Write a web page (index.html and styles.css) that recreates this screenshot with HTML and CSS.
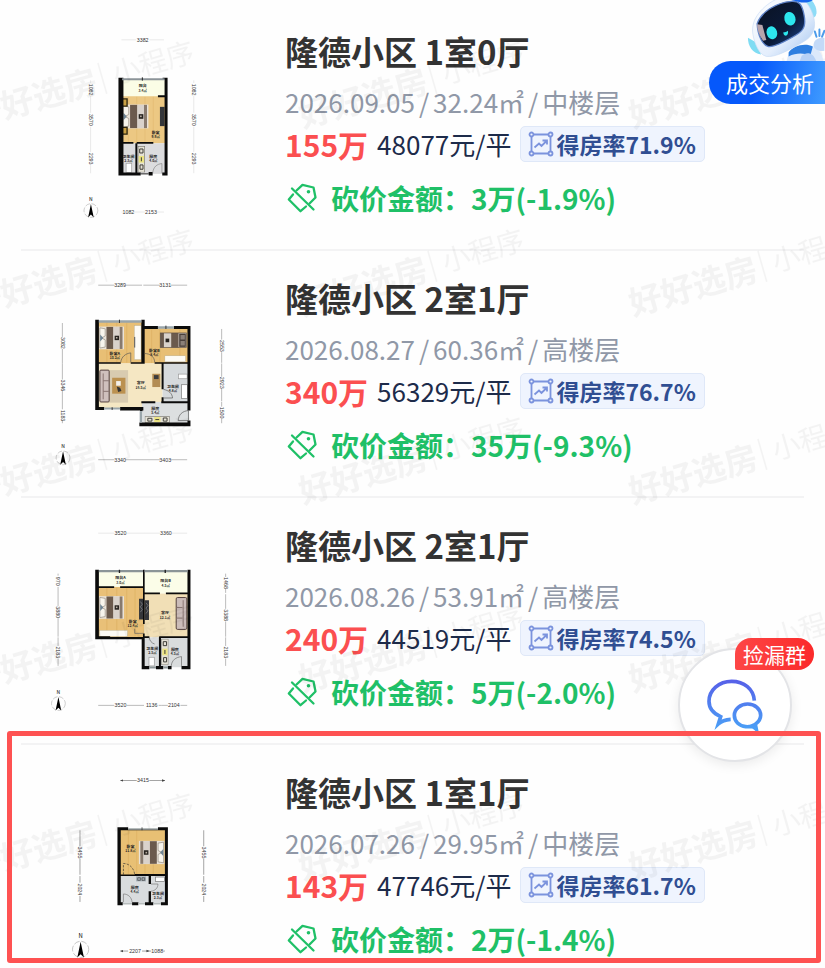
FILE: index.html
```html
<!DOCTYPE html>
<html lang="zh-CN">
<head>
    <meta charset="UTF-8">
    <meta name="viewport" content="width=device-width, initial-scale=1.0">
    <link rel="stylesheet" href="styles.css">
    <title>隆德小区 成交记录</title>
</head>
<body>

    <!-- shared icons -->
    <svg class="defs" aria-hidden="true">
        <defs>
            <symbol id="icon-ratio" viewBox="0 0 26 26">
                <g fill="none" stroke="#7b93dd" stroke-width="1.8">
                    <path d="M5 3.500H21M5 22.500H21M3.500 5V21M22.500 5V21"/>
                    <circle cx="3.500" cy="3.500" r="2"/>
                    <circle cx="22.500" cy="3.500" r="2"/>
                    <circle cx="3.500" cy="22.500" r="2"/>
                    <circle cx="22.500" cy="22.500" r="2"/>
                    <path d="M6.500 16.500L11 12.500L13.500 15L18.500 10M14.500 9.500H19V13.500"/>
                </g>
            </symbol>
            <symbol id="icon-cut" viewBox="0 0 30 30">
                <g fill="none" stroke="#1fc067" stroke-width="2.300" stroke-linecap="round" stroke-linejoin="round">
                    <path d="M9.500 7.500L15.500 1.800L26.500 4.500L28.500 14.500L22.500 20.500"/>
                    <path d="M6 11.500L1.800 16.500L13.500 28.200L19 23.500"/>
                    <path d="M5 5.500L26.500 26.500"/>
                </g>
                <circle cx="21.500" cy="8.800" r="1.800" fill="#1fc067"/>
            </symbol>
            <symbol id="bed" viewBox="0 0 80 76">
                <rect x="0" y="2" width="80" height="72" fill="#e9e2d8"/>
                <path d="M3 6L20 9V32L8 38L20 44V67L3 70Z" fill="#f7f4ec" stroke="#8d8478" stroke-width="2"/>
                <path d="M4 27L14 38L4 49Z" fill="#6f8594"/>
                <rect x="24" y="3" width="22" height="70" fill="#6b5a4d"/>
                <rect x="46" y="3" width="20" height="70" fill="#d9d2cb"/>
                <rect x="66" y="3" width="9" height="70" fill="#887a6e"/>
                <rect x="50" y="31" width="14" height="14" fill="#27231f"/>
                <rect x="54" y="35" width="5" height="5" fill="#b9afa3"/>
            </symbol>
            <symbol id="compass" viewBox="0 0 50 72">
                <text x="25" y="14" font-size="16" text-anchor="middle">N</text>
                <circle cx="25" cy="45" r="22" fill="none" stroke="#999" stroke-width="1.500" stroke-dasharray="16 5"/>
                <path d="M25 24L34 67L25 58L16 67Z" fill="#000"/>
            </symbol>
            <symbol id="stove" viewBox="0 0 22 80">
                <rect x="1" y="1" width="20" height="78" fill="#e5e2d6" stroke="#77756d" stroke-width="2"/>
                <rect x="3" y="30" width="16" height="20" fill="#ece483"/>
                <path d="M6 9h10v12H6zM11 34v12M7 57h9v13H7z" fill="none" stroke="#3c3b36" stroke-width="3"/>
            </symbol>
            <marker id="tick" viewBox="0 0 8 8" refX="7" refY="4" markerWidth="5" markerHeight="5" orient="auto-start-reverse">
                <path d="M0 1L8 4L0 7Z" fill="#444"/>
            </marker>
            <pattern id="mark" width="330" height="188" patternUnits="userSpaceOnUse" x="295" y="-48">
                <g transform="translate(8 176) rotate(-16)">
                    <text class="mark-big" x="0" y="0">好好选房</text>
                    <path d="M138 -28V4" stroke="#000" stroke-width="1.500"/>
                    <text class="mark-small" x="149" y="-3">小程序</text>
                </g>
            </pattern>
        </defs>
    </svg>

    <ul class="list">
        <li class="item">
            <svg class="plan" viewBox="63 12 750 654" role="img" aria-label="户型图">
                <rect x="360" y="240" width="138" height="52" fill="#fbfde6"/>
                <rect x="360" y="290" width="138" height="142" fill="#ecc883"/>
                <path d="M385 292V430M410 292V430M435 292V430M460 292V430" stroke="#e2b970" stroke-width="2"/>
                <rect x="360" y="432" width="138" height="92" fill="#dcdcde"/>
                <use href="#bed" x="366" y="313" width="80" height="76"/>
                <path d="M365 298h16v22h-16zM365 384h16v20h-16z" fill="#c9a145" stroke="#2e2710" stroke-width="4"/>
                <rect x="480" y="322" width="14" height="58" fill="#34363a"/>
                <rect x="378" y="492" width="17" height="28" fill="#fff" stroke="#999" stroke-width="2"/>
                <use href="#stove" x="413" y="440" width="22" height="80"/>
                <path d="M355 234H370V520H422V529H355ZM488 234H503V529H487V520H494V240H488ZM406 432H412V522H406ZM446 518H458V529H446ZM355 428H400V433H355ZM410 428H460V433H410ZM474 287H498V293H474Z" fill="#0b0b0b"/>
                <path d="M366 236H494V242H366Z" fill="#8c9499"/>
                <path d="M427 233V243M422 524H446" stroke="#222" stroke-width="3"/>
                <path d="M458 522C460 502 472 494 486 493V522" fill="none" stroke="#666" stroke-width="1.500"/>
                <g class="room">
                    <text x="428" y="263">阳台</text><text x="428" y="277" class="area">3.4㎡</text>
                    <text x="467" y="404">卧室</text><text x="467" y="417" class="area">9.9㎡</text>
                    <text x="385" y="475">卫生间</text><text x="385" y="488" class="area">2.3㎡</text>
                    <text x="460" y="475">厨房</text><text x="460" y="488" class="area">4.0㎡</text>
                </g>
                <g class="dim">
                    <path class="faint" d="M364 120H408M448 120H492M364 639H368M402 639H412M412 639H436M470 639H492"/>
                    <path class="faint" d="M271 242V250M271 288V340M271 382V458M271 498V522M582 242V250M582 288V340M582 382V458M582 498V522"/>
                    <text x="428" y="126">3382</text>
                    <text x="385" y="645">1082</text>
                    <text x="453" y="645">2153</text>
                    <g transform="translate(266 270) rotate(90)"><text>1082</text></g>
                    <g transform="translate(266 361) rotate(90)"><text>3570</text></g>
                    <g transform="translate(266 478) rotate(90)"><text>2293</text></g>
                    <g transform="translate(577 270) rotate(90)"><text>1082</text></g>
                    <g transform="translate(577 361) rotate(90)"><text>3570</text></g>
                    <g transform="translate(577 478) rotate(90)"><text>2293</text></g>
                </g>
                <use href="#compass" x="247" y="592" width="50" height="68"/>
            </svg>
            <div class="info">
                <h2 class="title">隆德小区 1室0厅</h2>
                <p class="meta">2026.09.05<span class="slash">/</span>32.24㎡<span class="slash">/</span>中楼层</p>
                <div class="price">
                    <strong class="total">155万</strong>
                    <span class="unit">48077元/平</span>
                    <span class="ratio"><svg class="ratio-icon"><use href="#icon-ratio"/></svg>得房率71.9%</span>
                </div>
                <p class="cut"><svg class="cut-icon"><use href="#icon-cut"/></svg>砍价金额：3万(-1.9%)</p>
            </div>
        </li>

        <li class="item">
            <svg class="plan" viewBox="63 3 750 654" role="img" aria-label="户型图">
                <rect x="290" y="216" width="138" height="126" fill="#e8bf75"/>
                <rect x="430" y="236" width="138" height="106" fill="#e8bf75"/>
                <path d="M320 218V340M350 218V340M380 218V340M455 240V340M480 240V340M540 240V340" stroke="#dcae60" stroke-width="2"/>
                <rect x="290" y="342" width="198" height="134" fill="#f5e7c3"/>
                <rect x="488" y="342" width="78" height="116" fill="#d6dadc"/>
                <rect x="426" y="458" width="142" height="68" fill="#dcdfe0"/>
                <use href="#bed" x="296" y="228" width="76" height="74"/>
                <rect x="403" y="228" width="20" height="102" fill="#fdfbf5" stroke="#aa9"/>
                <path d="M404 262V294" stroke="#555" stroke-width="3"/>
                <!-- bed with the pillows on the right -->
                <rect x="481" y="250" width="79" height="44" fill="#d9d2cb"/>
                <path d="M481 250h11v44h-11zM514 250h22v44h-22z" fill="#6b5a4d"/>
                <path d="M497 267h11v11h-11z" fill="#27231f"/>
                <path d="M538 252h20v40h-20z" fill="#4a403b"/>
                <path d="M542 256h13v14h-13zM542 274h13v14h-13z" fill="#8b8078"/>
                <rect x="481" y="250" width="79" height="44" fill="none" stroke="#5d4f43" stroke-width="2"/>
                <rect x="495" y="319" width="62" height="18" fill="#fdfbf5" stroke="#aa9"/>
                <rect x="326" y="362" width="58" height="98" fill="#d8cbb0"/>
                <rect x="336" y="385" width="40" height="48" fill="#bb9150"/>
                <path d="M348 395h14v14h-14z" fill="#f4f1ea"/>
                <path d="M350 411l10 4 4 10-10 3z" fill="#333"/>
                <rect x="299" y="362" width="28" height="96" rx="3" fill="#cfc0bd" stroke="#54413f" stroke-width="3"/>
                <path d="M309 372V450M309 394H327M309 426H327" stroke="#8a7673" stroke-width="3"/>
                <rect x="457" y="373" width="24" height="40" fill="#b38d54"/>
                <path d="M462 377h14v12h-14z" fill="#3c3c3c"/>
                <rect x="536" y="374" width="26" height="14" fill="#fff" stroke="#999" stroke-width="2"/>
                <rect x="545" y="406" width="18" height="42" fill="#fff" stroke="#777" stroke-width="2"/>
                <g transform="translate(510 500) rotate(90)"><use href="#stove" width="22" height="76"/></g>
                <path d="M285 210H296V473H312V482H285ZM424 210H434V340H424ZM432 229H474V238H432ZM522 229H572V484H563V238H522ZM296 338H362V343H296ZM392 338H434V343H392ZM464 338H566V343H464ZM485 342H491V420H485ZM485 444H491V458H485ZM424 456H466V462H424ZM484 456H568V462H484ZM360 473H430V484H360ZM418 520H563V514H572V531H418ZM420 476H427V486H420Z" fill="#0b0b0b"/>
                <path d="M296 212H424V219H296ZM474 230H522V237H474ZM312 475H360V481H312ZM419 486H426V520H419Z" fill="#99a5aa"/>
                <path d="M358 210V220M498 228V238M336 474V482" stroke="#333" stroke-width="3"/>
                <path d="M362 338C364 322 376 312 392 310V338M434 312C450 312 464 322 464 338M491 446H518C517 432 506 423 491 420M535 514C536 496 548 485 566 484V514H535" fill="none" stroke="#555" stroke-width="2"/>
                <g class="room">
                    <text x="344" y="316">卧室A</text><text x="344" y="329" class="area">10.2㎡</text>
                    <text x="463" y="306">卧室B</text><text x="463" y="319" class="area">8.4㎡</text>
                    <text x="422" y="405">客厅</text><text x="422" y="418" class="area">16.5㎡</text>
                    <text x="519" y="415">卫生间</text><text x="519" y="428" class="area">4.8㎡</text>
                    <text x="466" y="482">厨房</text><text x="466" y="495" class="area">5.4㎡</text>
                </g>
                <g class="dim">
                    <path d="M294 106H343M378 106H426M430 106H480M513 106H562M294 632H343M376 632H426M426 632H480M513 632H562"/>
                    <path d="M186 220V262M186 298V342M186 342V390M186 425V480M186 514V522M666 238V270M666 308V340M666 342V382M666 418V456M666 458V472M666 508V522"/>
                    <text x="360" y="112">3289</text>
                    <text x="496" y="112">3131</text>
                    <text x="360" y="638">3340</text>
                    <text x="496" y="638">3403</text>
                    <g transform="translate(181 280) rotate(90)"><text>3082</text></g>
                    <g transform="translate(181 408) rotate(90)"><text>3346</text></g>
                    <g transform="translate(181 499) rotate(90)"><text>1183</text></g>
                    <g transform="translate(661 289) rotate(90)"><text>2553</text></g>
                    <g transform="translate(661 400) rotate(90)"><text>2923</text></g>
                    <g transform="translate(661 490) rotate(90)"><text>1500</text></g>
                </g>
                <use href="#compass" x="163" y="584" width="50" height="68"/>
            </svg>
            <div class="info">
                <h2 class="title">隆德小区 2室1厅</h2>
                <p class="meta">2026.08.27<span class="slash">/</span>60.36㎡<span class="slash">/</span>高楼层</p>
                <div class="price">
                    <strong class="total">340万</strong>
                    <span class="unit">56329元/平</span>
                    <span class="ratio"><svg class="ratio-icon"><use href="#icon-ratio"/></svg>得房率76.7%</span>
                </div>
                <p class="cut"><svg class="cut-icon"><use href="#icon-cut"/></svg>砍价金额：35万(-9.3%)</p>
            </div>
        </li>

        <li class="item">
            <svg class="plan" viewBox="63 -6 750 654" role="img" aria-label="户型图">
                <rect x="290" y="216" width="140" height="46" fill="#fbfde8"/>
                <rect x="432" y="216" width="134" height="66" fill="#fbfde8"/>
                <rect x="290" y="262" width="142" height="152" fill="#e9c078"/>
                <path d="M320 264V410M350 264V410M380 264V410M405 264V410" stroke="#dcae60" stroke-width="2"/>
                <rect x="432" y="282" width="134" height="132" fill="#f1dfb6"/>
                <rect x="430" y="414" width="138" height="90" fill="#d9dcdd"/>
                <use href="#bed" x="296" y="288" width="76" height="72"/>
                <rect x="298" y="393" width="84" height="18" fill="#fdfbf5" stroke="#aa9"/>
                <path d="M417 298h13v62h-13zM434 302h13v60h-13z" fill="#34363a"/>
                <path d="M421 306l6 8-6 8 6 8-6 8M438 310l6 8-6 8 6 8-6 8" fill="none" stroke="#8d8f92" stroke-width="2"/>
                <rect x="529" y="294" width="32" height="96" rx="4" fill="#cbbcb9" stroke="#54413f" stroke-width="3"/>
                <path d="M550 302V382M530 324H548M530 356H548" stroke="#8a7673" stroke-width="3"/>
                <use href="#stove" x="484" y="418" width="22" height="80"/>
                <rect x="447" y="474" width="16" height="26" fill="#fff" stroke="#999" stroke-width="2"/>
                <path d="M285 210H296V411H330V413H432V420H285ZM429 210H434V374H429ZM563 210H572V510H545V500H563ZM296 260H342V265H296ZM360 260H432V265H360ZM434 279H480V284H434ZM498 279H566V284H498ZM429 402H434V420H429ZM425 418H434V500H448V510H425ZM477 412H483V500H477ZM468 500H490V510H468ZM434 411H448V416H434ZM478 411H566V416H478ZM504 500H515V510H504Z" fill="#0b0b0b"/>
                <path d="M296 211H429V218H296ZM434 211H563V218H434ZM448 502H468V508H448ZM490 502H504V508H490Z" fill="#8b9597"/>
                <path d="M358 210V220M496 210V220" stroke="#222" stroke-width="4"/>
                <path d="M404 388V402H430M448 414C448 424 456 432 464 434M514 500C516 482 528 474 545 472V500" fill="none" stroke="#666" stroke-width="2"/>
                <g class="room">
                    <text x="361" y="239">阳台A</text><text x="361" y="252" class="area">3.0㎡</text>
                    <text x="497" y="248">阳台B</text><text x="497" y="261" class="area">4.5㎡</text>
                    <text x="398" y="370">卧室</text><text x="398" y="383" class="area">12.4㎡</text>
                    <text x="495" y="345">客厅</text><text x="495" y="358" class="area">12.1㎡</text>
                    <text x="457" y="451">卫生间</text><text x="457" y="464" class="area">2.5㎡</text>
                    <text x="525" y="455">厨房</text><text x="525" y="468" class="area">4.5㎡</text>
                </g>
                <g class="dim">
                    <path class="faint" d="M294 100H342M380 100H434M434 100H480M516 100H562"/>
                    <path d="M294 619H342M380 619H432M476 619H484M484 619H504M542 619H562"/>
                    <path d="M173 222V228M173 262V320M173 356V412M173 414V440M173 478V500M678 222V232M678 268V280M678 284V328M678 366V412M678 414V440M678 478V500"/>
                    <text x="361" y="106">3520</text>
                    <text x="498" y="106">3360</text>
                    <text x="361" y="625">3520</text>
                    <text x="455" y="625">1136</text>
                    <text x="522" y="625">2104</text>
                    <g transform="translate(168 245) rotate(90)"><text>970</text></g>
                    <g transform="translate(168 338) rotate(90)"><text>3880</text></g>
                    <g transform="translate(168 459) rotate(90)"><text>2183</text></g>
                    <g transform="translate(673 250) rotate(90)"><text>1468</text></g>
                    <g transform="translate(673 347) rotate(90)"><text>3388</text></g>
                    <g transform="translate(673 459) rotate(90)"><text>2183</text></g>
                </g>
                <use href="#compass" x="149" y="571" width="50" height="68"/>
            </svg>
            <div class="info">
                <h2 class="title">隆德小区 2室1厅</h2>
                <p class="meta">2026.08.26<span class="slash">/</span>53.91㎡<span class="slash">/</span>高楼层</p>
                <div class="price">
                    <strong class="total">240万</strong>
                    <span class="unit">44519元/平</span>
                    <span class="ratio"><svg class="ratio-icon"><use href="#icon-ratio"/></svg>得房率74.5%</span>
                </div>
                <p class="cut"><svg class="cut-icon"><use href="#icon-cut"/></svg>砍价金额：5万(-2.0%)</p>
            </div>
        </li>

        <li class="item picked">
            <svg class="plan" viewBox="63 75 750 654" role="img" aria-label="户型图">
                <rect x="358" y="328" width="140" height="140" fill="#e8c074"/>
                <path d="M385 332V464M410 332V464M435 432V464M460 432V464" stroke="#dcae60" stroke-width="2"/>
                <rect x="358" y="468" width="140" height="86" fill="#d9dcde"/>
                <g transform="translate(494 436) rotate(180)"><use href="#bed" width="78" height="74"/></g>
                <rect x="408" y="471" width="30" height="15" fill="#a6b0b8"/>
                <path d="M413 475h8v8h-8zM426 475h8v8h-8z" fill="none" stroke="#444" stroke-width="2"/>
                <rect x="467" y="473" width="27" height="13" fill="#fff" stroke="#777" stroke-width="2"/>
                <path d="M352 323H384V332H362V549H368V558H352ZM474 323H504V558H483V549H495V332H474ZM360 465H404V470H360ZM404 464H496V470H404ZM446 468H453V494H446ZM446 516H453V549H460V558H435V549H446ZM396 549H415V558H396Z" fill="#0b0b0b"/>
                <path d="M384 325H474V331H384ZM368 551H396V556H368ZM415 551H435V556H415ZM460 551H483V556H460Z" fill="#b7bdbd"/>
                <path d="M384 331H474M426 323V332" stroke="#222" stroke-width="2"/>
                <path d="M370 466V432C388 432 402 446 404 466" fill="none" stroke="#333" stroke-width="2" stroke-dasharray="7 4"/>
                <path d="M370 549V524C384 524 395 534 396 549M453 516C466 514 474 506 474 494H453" fill="none" stroke="#777" stroke-width="2"/>
                <g class="room">
                    <text x="391" y="384">卧室</text><text x="391" y="397" class="area">11.8㎡</text>
                    <text x="404" y="509">厨房</text><text x="404" y="522" class="area">4.4㎡</text>
                    <text x="474" y="527">卫生间</text><text x="474" y="540" class="area">2.3㎡</text>
                </g>
                <g class="dim strong">
                    <path marker-start="url(#tick)" d="M361 182H410"/>
                    <path marker-end="url(#tick)" d="M448 182H495"/>
                    <path marker-start="url(#tick)" d="M361 696H384"/>
                    <path marker-end="url(#tick)" d="M426 696H448"/>
                    <path d="M448 696H454M490 696H495"/>
                    <path d="M239 332V380M239 418V466M239 470V490M239 530V548M612 332V380M612 418V466M612 470V490M612 530V548"/>
                    <text x="429" y="188">3415</text>
                    <text x="405" y="702">2207</text>
                    <text x="472" y="702">1088</text>
                    <g transform="translate(234 399) rotate(90)"><text>3455</text></g>
                    <g transform="translate(234 510) rotate(90)"><text>2024</text></g>
                    <g transform="translate(607 399) rotate(90)"><text>3455</text></g>
                    <g transform="translate(607 510) rotate(90)"><text>2024</text></g>
                </g>
                <use href="#compass" x="213" y="641" width="56" height="80"/>
            </svg>
            <div class="info">
                <h2 class="title">隆德小区 1室1厅</h2>
                <p class="meta">2026.07.26<span class="slash">/</span>29.95㎡<span class="slash">/</span>中楼层</p>
                <div class="price">
                    <strong class="total">143万</strong>
                    <span class="unit">47746元/平</span>
                    <span class="ratio"><svg class="ratio-icon"><use href="#icon-ratio"/></svg>得房率61.7%</span>
                </div>
                <p class="cut"><svg class="cut-icon"><use href="#icon-cut"/></svg>砍价金额：2万(-1.4%)</p>
            </div>
        </li>
    </ul>

    <svg class="watermark" aria-hidden="true">
        <rect width="100%" height="100%" fill="url(#mark)"/>
    </svg>

    <div class="analysis">
        <svg class="robot" viewBox="315 0 240 186" aria-hidden="true">
            <defs>
                <linearGradient id="head" x1="0" y1="0" x2="1" y2="1">
                    <stop offset="0" stop-color="#ffffff"/>
                    <stop offset="0.600" stop-color="#e4eefc"/>
                    <stop offset="1" stop-color="#9fc2f0"/>
                </linearGradient>
                <linearGradient id="visor" x1="0" y1="0" x2="1" y2="1">
                    <stop offset="0" stop-color="#0a1222"/>
                    <stop offset="0.600" stop-color="#0b1a38"/>
                    <stop offset="1" stop-color="#1d4a96"/>
                </linearGradient>
            </defs>
            <path d="M322 115C322 140 335 162 362 166L345 128Z" fill="#7fdcf3"/>
            <ellipse cx="513" cy="25" rx="16" ry="30" fill="#8edcf7" transform="rotate(-20 513 25)"/>
            <path d="M440 186C445 155 470 138 505 140C535 142 548 160 552 186Z" fill="#dce9fb"/>
            <path d="M446 160C460 140 495 130 520 142L512 170C490 160 468 162 446 172Z" fill="#2f7fe0"/>
            <path d="M486 170C500 158 520 158 530 186H480Z" fill="#b6d1f6"/>
            <path d="M522 142C520 125 535 112 555 116V155C540 158 526 152 522 142Z" fill="#c3daf8"/>
            <path d="M531 112L526 96M540 110V90M548 112L555 94" stroke="#4b9bea" stroke-width="6" stroke-linecap="round"/>
            <path d="M342 62C360 22 410 -14 455 -12C490 -12 508 10 520 45C532 80 524 110 490 128C450 152 405 176 378 172C352 166 338 120 336 95C336 82 338 72 342 62Z" fill="url(#head)" stroke="#c9dbf5" stroke-width="2"/>
            <path d="M350 72C362 38 405 8 455 4C478 2 486 14 492 40C500 76 494 92 470 106C440 124 405 144 385 142C366 138 352 108 350 72Z" fill="url(#visor)" stroke="#5f83c8" stroke-width="4"/>
            <path d="M350 74L366 76L378 122L368 124C358 110 350 92 350 74Z" fill="#b8a5ac"/>
            <ellipse cx="395" cy="100" rx="16" ry="20" fill="#2de6ee" transform="rotate(-16 395 100)"/>
            <ellipse cx="450" cy="57" rx="17" ry="21" fill="#2de6ee" transform="rotate(-16 450 57)"/>
            <path d="M430 98Q438 100 444 94Q446 106 438 109Q430 108 430 98Z" fill="#2de6ee"/>
            <path d="M455 0H520C510 8 490 10 478 6Z" fill="#1766ee"/>
        </svg>
        <button type="button" class="analysis-btn">成交分析</button>
    </div>

    <button type="button" class="chat">
        <svg class="chat-icon" viewBox="258 235 174 162" aria-hidden="true">
            <defs>
                <linearGradient id="bubble" gradientUnits="userSpaceOnUse" x1="0" y1="240" x2="0" y2="390">
                    <stop offset="0" stop-color="#5760e8"/>
                    <stop offset="1" stop-color="#4aa0f6"/>
                </linearGradient>
            </defs>
            <g fill="none" stroke="url(#bubble)" stroke-width="11">
                <path d="M403 303C401 268 372 245 335 245C297 245 267 271 267 305C267 326 281 342 302 351L295 373Q309 360 332 359"/>
                <path d="M403 376C393 381 384 382 377 381C357 379 343 365 343 347C343 328 361 313 383 313C405 313 422 328 422 347C422 358 416 367 406 374L409 389Q400 379 390 380"/>
            </g>
        </svg>
        <span class="chat-badge">捡漏群</span>
    </button>

</body>
</html>
```
FILE: styles.css
```css
* {
    box-sizing: border-box;
}

body {
    position: relative;
    margin: 0;
    padding: 4px 21px 8px;
    background-color: #fefefe;
    font-family: "Noto Sans CJK SC", sans-serif;
    color: #333;
    overflow-x: hidden;
}

h2, p, ul {
    margin: 0;
    padding: 0;
}

.defs {
    position: absolute;
    width: 0;
    height: 0;
}

/* listing rows */
.list {
    list-style: none;
}

.item {
    position: relative;
    display: flex;
    gap: 14px;
    padding-bottom: 28px;
    border-bottom: 2px solid #f3f3f4;
}

.item:last-child {
    padding-bottom: 0;
    border-bottom: none;
}

.plan {
    flex: none;
    width: 250px;
    height: 217px;
}

.info {
    flex: 1;
    min-width: 0;
    padding-top: 23px;
    white-space: nowrap;
}

.title {
    font-size: 33px;
    line-height: 48px;
    font-weight: bold;
}

.meta {
    margin-top: 8px;
    font-size: 26px;
    line-height: 38px;
    color: #9098a7;
}

.slash {
    margin: 0 4px;
}

.price {
    display: flex;
    align-items: center;
    gap: 9px;
    margin-top: 5px;
    line-height: 36px;
}

.total {
    font-size: 30px;
    color: #fb4f50;
}

.unit {
    font-size: 26px;
    color: #1d2b4a;
}

.ratio {
    display: flex;
    align-items: center;
    gap: 2px;
    height: 36px;
    padding: 0 8px 0 7px;
    border: 1px solid #dfe8f8;
    border-radius: 5px;
    background-color: #eff4fe;
    font-size: 23px;
    font-weight: bold;
    color: #304e92;
}

.ratio-icon {
    width: 26px;
    height: 26px;
}

.cut {
    display: flex;
    align-items: center;
    gap: 14px;
    margin-top: 18px;
    padding-left: 2px;
    font-size: 28px;
    line-height: 36px;
    font-weight: bold;
    color: #1fc067;
}

.cut-icon {
    width: 30px;
    height: 30px;
}

/* red frame round the picked row */
.picked::after {
    content: "";
    position: absolute;
    top: -14px;
    right: -17px;
    bottom: -1px;
    left: -14px;
    z-index: 3;
    border: 5px solid #fe5252;
    border-radius: 3px;
    pointer-events: none;
}

/* floor plans */
.room text {
    font-size: 12px;
    font-weight: bold;
    text-anchor: middle;
    fill: #222;
}

.room .area {
    font-size: 10px;
}

.dim text {
    font-family: "Liberation Sans", sans-serif;
    font-size: 16px;
    text-anchor: middle;
    fill: #333;
}

.dim path {
    fill: none;
    stroke: #999;
    stroke-width: 2;
}

.dim .faint {
    stroke: #ddd;
}

.strong path {
    stroke: #777;
}

.watermark {
    position: absolute;
    top: 0;
    left: 0;
    z-index: 1;
    width: 100%;
    height: 100%;
    opacity: 0.04;
    pointer-events: none;
}

.mark-big {
    font-size: 33px;
    font-weight: bold;
}

.mark-small {
    font-size: 28px;
}

/* floating buttons */
button {
    border: none;
    font-family: inherit;
    cursor: pointer;
}

.analysis {
    position: absolute;
    top: 0;
    right: 0;
    z-index: 2;
    display: flex;
    flex-direction: column;
    align-items: flex-end;
}

.robot {
    width: 80px;
    height: 61px;
}

.analysis-btn {
    height: 43px;
    padding: 0 11px 0 17px;
    border-radius: 22px 0 0 22px;
    background: linear-gradient(100deg, #0558fb 40%, #3f9bff);
    font-size: 22px;
    line-height: 43px;
    color: #fff;
}

.chat {
    position: absolute;
    top: 648px;
    right: 33px;
    z-index: 2;
    display: flex;
    align-items: center;
    justify-content: center;
    width: 114px;
    height: 114px;
    padding: 0;
    border: 2px solid #e3e4e7;
    border-radius: 50%;
    background-color: #fff;
    box-shadow: 0 3px 12px rgba(0, 0, 0, 0.08);
}

.chat-icon {
    width: 58px;
    height: 54px;
}

.chat-badge {
    position: absolute;
    top: -12px;
    right: -24px;
    padding: 0 8px;
    border-radius: 16px 16px 16px 2px;
    background: linear-gradient(90deg, #fd4646, #fb2a2a);
    font-size: 21px;
    line-height: 32px;
    color: #fff;
}
```
